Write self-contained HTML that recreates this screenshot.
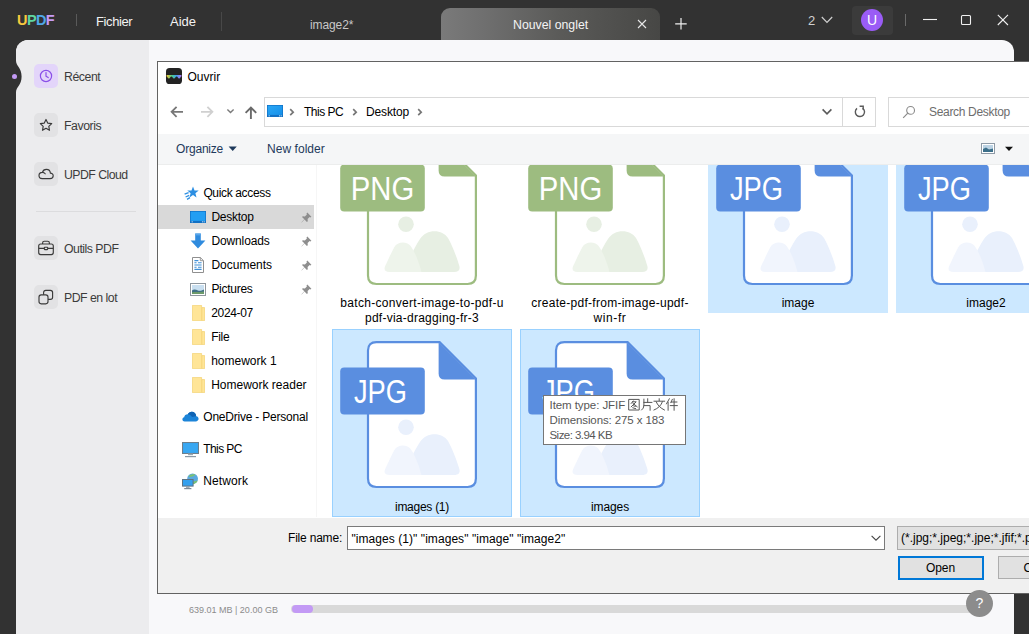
<!DOCTYPE html>
<html>
<head>
<meta charset="utf-8">
<title>UPDF</title>
<style>
*{box-sizing:border-box;margin:0;padding:0}
html,body{width:1029px;height:634px;overflow:hidden}
body{background:#323232;font-family:"Liberation Sans",sans-serif;position:relative;color:#000}
.abs{position:absolute}
.t{position:absolute;white-space:nowrap;line-height:1}
/* title bar */
.menu{color:#f2f2f2;font-size:13.5px}
.sep{position:absolute;width:1px;background:#5a5a5a}
/* panel */
#panel{left:16px;top:40px;width:998px;height:594px;background:#f8f8fa;border-radius:12px 12px 0 0}
#side{left:16px;top:40px;width:133px;height:594px;background:#ececee;border-radius:12px 0 0 0}
.sbtn{position:absolute;left:34px;width:24px;height:24px;border-radius:5px;background:#e2e2e4}
.slab{color:#3c3c3c;font-size:12.5px;left:64px}
/* dialog */
#dlg{left:157px;top:61px;width:900px;height:533px;background:#fff;border:1px solid #626262}
.nav{font-size:12px;color:#000}
.cell{position:absolute;width:180px}
.sel{background:#cce8ff}
.fname{position:absolute;left:0;width:180px;text-align:center;font-size:12px;line-height:15px;color:#000}
</style>
</head>
<body>
<!-- ===== top bar ===== -->
<div id="topbar" class="abs" style="left:0;top:0;width:1029px;height:40px">
  <div class="t" style="left:17px;top:13px;font-size:14.5px;font-weight:bold;letter-spacing:-0.6px"><span style="color:#f7c93e">U</span><span style="color:#5fd6a0">P</span><span style="color:#4fa8e8">D</span><span style="color:#c79bf7">F</span></div>
  <div class="sep" style="left:76px;top:14px;height:12px"></div>
  <div class="t menu" style="left:96px;top:15px;font-size:13px;letter-spacing:-0.4px">Fichier</div>
  <div class="t menu" style="left:170px;top:15px;font-size:13px">Aide</div>
  <div class="sep" style="left:221px;top:12px;height:19px;background:#484848"></div>
  <div class="t" style="left:310px;top:19px;font-size:12px;color:#c8c8c8;letter-spacing:-0.1px">image2*</div>
  <!-- active tab -->
  <div class="abs" style="left:441px;top:8px;width:219px;height:32px;border-radius:9px 9px 0 0;background:linear-gradient(90deg,#7a7a7a 0%,#6f6f6f 20%,#5a5a58 55%,#474745 100%)"></div>
  <div class="t" style="left:513px;top:19px;font-size:12.3px;color:#f4f4f4">Nouvel onglet</div>
  <svg class="abs" style="left:636px;top:18px" width="12" height="12" viewBox="0 0 12 12"><path d="M2 2 L10 10 M10 2 L2 10" stroke="#e8e8e8" stroke-width="1.1" fill="none"/></svg>
  <svg class="abs" style="left:674px;top:17px" width="14" height="14" viewBox="0 0 14 14"><path d="M7 1 V12.5 M1.2 6.8 H12.7" stroke="#f0f0f0" stroke-width="1.2" fill="none"/></svg>
  <div class="t" style="left:808px;top:14px;font-size:13px;color:#d0d0d0">2</div>
  <svg class="abs" style="left:820px;top:15px" width="14" height="10" viewBox="0 0 14 10"><path d="M1.8 2 L7 7.4 L12.2 2" stroke="#d0d0d0" stroke-width="1.2" fill="none"/></svg>
  <div class="abs" style="left:852px;top:6px;width:41px;height:29px;border-radius:4px;background:#3b3b3b"></div>
  <div class="abs" style="left:861px;top:9px;width:22px;height:22px;border-radius:11px;background:#9a5cf6"></div>
  <div class="t" style="left:867px;top:13px;font-size:14px;color:#fff">U</div>
  <div class="sep" style="left:905px;top:14px;height:12px;background:#6a6a6a"></div>
  <svg class="abs" style="left:921px;top:12px" width="18" height="16" viewBox="0 0 18 16"><path d="M2 7.5 H16" stroke="#f0f0f0" stroke-width="1.1"/></svg>
  <svg class="abs" style="left:959px;top:13px" width="14" height="14" viewBox="0 0 14 14"><rect x="2.5" y="2.5" width="9" height="9" rx="1" stroke="#f0f0f0" stroke-width="1.1" fill="none"/></svg>
  <svg class="abs" style="left:996px;top:13px" width="14" height="14" viewBox="0 0 14 14"><path d="M1.8 1.8 L12 12 M12 1.8 L1.8 12" stroke="#f0f0f0" stroke-width="1.1" fill="none"/></svg>
</div>

<!-- ===== light panel ===== -->
<div id="panel" class="abs"></div>
<div id="side" class="abs"></div>
<!-- notch + dot -->
<svg class="abs" style="left:14px;top:58.5px" width="10" height="35" viewBox="0 0 10 40" preserveAspectRatio="none"><path d="M2 0 V2 C2 8 7.6 10 7.6 20 C7.6 30 2 32 2 38 V40 H0 V0 Z" fill="#323232"/></svg>
<div class="abs" style="left:11.5px;top:73.5px;width:5px;height:5px;border-radius:3px;background:#c39af5"></div>
<!-- sidebar items -->
<div class="sbtn" style="top:64px;background:#e3d5fa"></div>
<svg class="abs" style="left:38px;top:68px" width="16" height="16" viewBox="0 0 16 16"><circle cx="8" cy="8" r="5.6" stroke="#8a4fe8" stroke-width="1.2" fill="none"/><path d="M8 4.6 V8.2 L10.2 9.6" stroke="#8a4fe8" stroke-width="1.2" fill="none" stroke-linecap="round" stroke-linejoin="round"/></svg>
<div class="t slab" style="top:71px;font-size:12.3px;letter-spacing:-0.45px">Récent</div>

<div class="sbtn" style="top:113px"></div>
<svg class="abs" style="left:38px;top:117px" width="16" height="16" viewBox="0 0 16 16"><path d="M8 2.4 L9.7 6.1 L13.7 6.6 L10.8 9.3 L11.5 13.3 L8 11.3 L4.5 13.3 L5.2 9.3 L2.3 6.6 L6.3 6.1 Z" stroke="#3a3a3a" stroke-width="1.15" fill="none" stroke-linejoin="round"/></svg>
<div class="t slab" style="top:120px;font-size:12.3px;letter-spacing:-0.45px">Favoris</div>

<div class="sbtn" style="top:162px"></div>
<svg class="abs" style="left:37px;top:166px" width="18" height="16" viewBox="0 0 18 16"><path d="M5.2 12.6 H13 C15 12.6 16.2 11.3 16.2 9.8 C16.2 8.2 15 7.1 13.4 7.1 C13.2 4.8 11.5 3.3 9.4 3.3 C7.4 3.3 5.9 4.5 5.4 6.3 C3.5 6.3 2 7.7 2 9.5 C2 11.3 3.4 12.6 5.2 12.6 Z M5.4 6.3 C6.6 6.3 7.6 6.9 8.2 7.8" stroke="#3a3a3a" stroke-width="1.15" fill="none" stroke-linecap="round" stroke-linejoin="round"/></svg>
<div class="t slab" style="top:169px;font-size:12.3px;letter-spacing:-0.55px">UPDF Cloud</div>

<div class="abs" style="left:36px;top:210.5px;width:100px;height:1px;background:#dcdcde"></div>

<div class="sbtn" style="top:236px"></div>
<svg class="abs" style="left:37px;top:239px" width="18" height="18" viewBox="0 0 18 18"><rect x="1.7" y="5" width="14.6" height="10.6" rx="2" stroke="#3a3a3a" stroke-width="1.15" fill="none"/><path d="M5.6 5 V3.9 C5.6 2.8 6.3 2.2 7.3 2.2 H10.7 C11.7 2.2 12.4 2.8 12.4 3.9 V5 M1.7 9.4 H7.3 M10.7 9.4 H16.3" stroke="#3a3a3a" stroke-width="1.15" fill="none"/><rect x="7.3" y="8.3" width="3.4" height="2.3" rx="0.5" stroke="#3a3a3a" stroke-width="1.1" fill="none"/></svg>
<div class="t slab" style="top:243px;font-size:12.3px;letter-spacing:-0.5px">Outils PDF</div>

<div class="sbtn" style="top:285px"></div>
<svg class="abs" style="left:37px;top:288px" width="18" height="18" viewBox="0 0 18 18"><rect x="2" y="6.8" width="9" height="9" rx="2.2" stroke="#3a3a3a" stroke-width="1.15" fill="none"/><path d="M6.6 6.8 V4.6 C6.6 3.2 7.4 2.4 8.8 2.4 H13.4 C14.8 2.4 15.6 3.2 15.6 4.6 V9.2 C15.6 10.6 14.8 11.4 13.4 11.4 H11" stroke="#3a3a3a" stroke-width="1.15" fill="none"/></svg>
<div class="t slab" style="top:292px;font-size:12.3px;letter-spacing:-0.5px">PDF en lot</div>

<!-- ===== dialog ===== -->
<div id="dlg" class="abs"></div>
<!-- title -->
<svg class="abs" style="left:166px;top:68px" width="16" height="16" viewBox="0 0 16 16">
  <defs><linearGradient id="wv" x1="0" x2="1" y1="0" y2="0"><stop offset="0" stop-color="#f9c531"/><stop offset="0.35" stop-color="#4fd08a"/><stop offset="0.65" stop-color="#3ea2f0"/><stop offset="1" stop-color="#b774f5"/></linearGradient></defs>
  <rect x="0" y="0" width="16" height="16" rx="3.6" fill="#232323"/>
  <path d="M0.6 7 H15.4 V8.6 C14.6 8.6 14.3 10.6 13.1 10.6 C11.9 10.6 11.8 8.4 10.6 8.4 C9.4 8.4 9.3 10.6 8 10.6 C6.7 10.6 6.6 8.4 5.4 8.4 C4.2 8.4 4.1 10.6 2.9 10.6 C1.7 10.6 1.4 8.6 0.6 8.6 Z" fill="url(#wv)"/>
</svg>
<div class="t" style="left:187.5px;top:70.5px;font-size:12px">Ouvrir</div>
<!-- nav arrows -->
<svg class="abs" style="left:169px;top:104px" width="16" height="16" viewBox="0 0 16 16"><path d="M14 7.8 H2.8 M7.6 2.8 L2.6 7.8 L7.6 12.8" stroke="#777" stroke-width="1.8" fill="none"/></svg>
<svg class="abs" style="left:199px;top:104px" width="16" height="16" viewBox="0 0 16 16"><path d="M2 7.8 H13.2 M8.4 2.8 L13.4 7.8 L8.4 12.8" stroke="#d0d0d0" stroke-width="1.8" fill="none"/></svg>
<svg class="abs" style="left:226px;top:107px" width="9" height="8" viewBox="0 0 9 8"><path d="M1.4 2.4 L4.5 5.5 L7.6 2.4" stroke="#7a7a7a" stroke-width="1.4" fill="none"/></svg>
<svg class="abs" style="left:243px;top:105px" width="16" height="16" viewBox="0 0 16 16"><path d="M7.9 14 V3 M2.6 7.9 L7.9 2.6 L13.2 7.9" stroke="#6a6a6a" stroke-width="1.9" fill="none"/></svg>
<!-- address box -->
<div class="abs" style="left:264px;top:97px;width:612px;height:30px;border:1px solid #d9d9d9;background:#fff"></div>
<div class="abs" style="left:842px;top:98px;width:1px;height:28px;background:#d9d9d9"></div>
<svg class="abs" style="left:267px;top:105px" width="16" height="12" viewBox="0 0 16 12"><defs><linearGradient id="pcg" x1="0" x2="1" y1="0" y2="1"><stop offset="0" stop-color="#2aa7f5"/><stop offset="1" stop-color="#1590ea"/></linearGradient></defs><rect x="0" y="0" width="16" height="12" fill="#1170c4"/><rect x="0.7" y="0.7" width="14.6" height="9.2" fill="url(#pcg)"/><rect x="1.6" y="10.4" width="1.2" height="0.9" fill="#d8ecfb"/><rect x="12" y="10.4" width="1.1" height="0.9" fill="#d8ecfb"/><rect x="13.7" y="10.4" width="1.1" height="0.9" fill="#d8ecfb"/></svg>
<svg class="abs" style="left:288px;top:107px" width="8" height="10" viewBox="0 0 8 10"><path d="M2.2 2.2 L5.2 5.2 L2.2 8.2" stroke="#767676" stroke-width="1.7" fill="none"/></svg>
<div class="t" style="left:304px;top:105.5px;font-size:12px;letter-spacing:-0.5px">This PC</div>
<svg class="abs" style="left:350.5px;top:107px" width="8" height="10" viewBox="0 0 8 10"><path d="M2.2 2.2 L5.2 5.2 L2.2 8.2" stroke="#767676" stroke-width="1.7" fill="none"/></svg>
<div class="t" style="left:366px;top:105.5px;font-size:12px;letter-spacing:-0.15px">Desktop</div>
<svg class="abs" style="left:415.5px;top:107px" width="8" height="10" viewBox="0 0 8 10"><path d="M2.2 2.2 L5.2 5.2 L2.2 8.2" stroke="#767676" stroke-width="1.7" fill="none"/></svg>
<svg class="abs" style="left:821px;top:107px" width="12" height="10" viewBox="0 0 12 10"><path d="M1.6 2.4 L6 6.8 L10.4 2.4" stroke="#5a5a5a" stroke-width="1.6" fill="none"/></svg>
<svg class="abs" style="left:852px;top:104px" width="16" height="16" viewBox="0 0 16 16"><path d="M10.6 4.2 A4.6 4.6 0 1 1 5 4.4" stroke="#5a5a5a" stroke-width="1.4" fill="none"/><path d="M7.6 2.2 H11.2 V5.8" stroke="#5a5a5a" stroke-width="1.4" fill="none"/></svg>
<!-- search -->
<div class="abs" style="left:888px;top:97px;width:160px;height:30px;border:1px solid #d9d9d9;background:#fff"></div>
<svg class="abs" style="left:902px;top:105px" width="14" height="14" viewBox="0 0 14 14"><circle cx="8.6" cy="5.4" r="3.9" stroke="#8a8a8a" stroke-width="1.1" fill="none"/><path d="M5.8 8.2 L1.2 12.8" stroke="#8a8a8a" stroke-width="1.2"/></svg>
<div class="t" style="left:929px;top:105.5px;font-size:12px;color:#6d6d6d;letter-spacing:-0.32px">Search Desktop</div>
<!-- toolbar -->
<div class="abs" style="left:158px;top:134px;width:880px;height:31px;background:#f5f6f7;border-bottom:1px solid #eceded"></div>
<div class="t" style="left:176px;top:143px;font-size:12px;color:#1e395b;letter-spacing:-0.2px">Organize</div>
<svg class="abs" style="left:228px;top:146px" width="10" height="6" viewBox="0 0 10 6"><path d="M0.6 0.5 H8.8 L4.7 5 Z" fill="#1e395b"/></svg>
<div class="t" style="left:267px;top:143px;font-size:12px;color:#1e395b;letter-spacing:0.05px">New folder</div>
<svg class="abs" style="left:981px;top:143px" width="14" height="11" viewBox="0 0 14 11"><rect x="0.5" y="0.5" width="13" height="10" fill="#fff" stroke="#8e9aa6" stroke-width="1"/><rect x="2" y="2" width="10" height="7" fill="#bcd3e4"/><path d="M2 9 V6 L5 4.4 L8 6.6 L12 5.4 V9 Z" fill="#3c6f8a"/></svg>
<svg class="abs" style="left:1004px;top:146px" width="10" height="6" viewBox="0 0 10 6"><path d="M1 0.8 H9 L5 5 Z" fill="#111"/></svg>

<!-- nav pane -->
<div class="abs" style="left:158px;top:205px;width:156px;height:24px;background:#d9d9d9"></div>
<div class="abs" style="left:316px;top:165px;width:1px;height:352px;background:#f6f6f6"></div>
<div class="t nav" style="left:203.4px;top:186.5px;letter-spacing:-0.35px">Quick access</div>
<div class="t nav" style="left:211.4px;top:210.5px;letter-spacing:-0.26px">Desktop</div>
<div class="t nav" style="left:211.4px;top:234.5px;letter-spacing:-0.12px">Downloads</div>
<div class="t nav" style="left:211.4px;top:258.5px;letter-spacing:0px">Documents</div>
<div class="t nav" style="left:211.4px;top:282.5px;letter-spacing:-0.27px">Pictures</div>
<div class="t nav" style="left:211.2px;top:306.5px;letter-spacing:-0.33px">2024-07</div>
<div class="t nav" style="left:211.2px;top:330.5px;letter-spacing:-0.3px">File</div>
<div class="t nav" style="left:211.2px;top:354.5px;letter-spacing:0px">homework 1</div>
<div class="t nav" style="left:211.2px;top:378.5px;letter-spacing:0px">Homework reader</div>
<div class="t nav" style="left:203.3px;top:410.5px;letter-spacing:-0.22px">OneDrive - Personal</div>
<div class="t nav" style="left:203.3px;top:442.5px;letter-spacing:-0.6px">This PC</div>
<div class="t nav" style="left:203.3px;top:474.5px;letter-spacing:0.1px">Network</div>
<svg class="abs" style="left:184px;top:186px" width="15" height="14" viewBox="0 0 15 14"><path d="M9 0.4 L10.5 4.4 L14.7 4.6 L11.4 7.3 L12.5 11.5 L9 9.1 L5.5 11.5 L6.6 7.3 L3.3 4.6 L7.5 4.4 Z" fill="#2d8fe2"/><path d="M0.6 8.2 L4.6 6.6 M1.6 11 L5.2 9.4 M3 13.4 L6 11.6" stroke="#2d8fe2" stroke-width="1.3" fill="none"/></svg>
<svg class="abs" style="left:190px;top:211px" width="16" height="12" viewBox="0 0 16 12"><rect x="0" y="0" width="16" height="12" fill="#1170c4"/><rect x="0.7" y="0.7" width="14.6" height="9.2" fill="#229ef3"/><rect x="1.6" y="10.4" width="1.2" height="0.9" fill="#d8ecfb"/><rect x="12" y="10.4" width="1.1" height="0.9" fill="#d8ecfb"/><rect x="13.7" y="10.4" width="1.1" height="0.9" fill="#d8ecfb"/></svg>
<svg class="abs" style="left:190px;top:233px" width="16" height="16" viewBox="0 0 16 16"><path d="M5.2 0.6 H10.8 V7.4 H15.4 L8 15.4 L0.6 7.4 H5.2 Z" fill="#2f8bde"/><path d="M5.2 0.6 H10.8 V2.4 H5.2 Z" fill="#5aa6ea"/></svg>
<svg class="abs" style="left:192px;top:257px" width="12" height="16" viewBox="0 0 12 16"><path d="M0.5 0.5 H8.3 L11.5 3.7 V15.5 H0.5 Z" fill="#fff" stroke="#8f8f8f" stroke-width="1"/><path d="M8.3 0.5 V3.7 H11.5" fill="none" stroke="#8f8f8f" stroke-width="0.9"/><path d="M2.4 3.6 H6.4 M2.4 5.8 H4.6 M6 5.8 H9.6 M2.4 8 H9.6 M2.4 10.2 H4.6 M6 10.2 H9.6 M2.4 12.4 H9.6" stroke="#3f8fd6" stroke-width="1.1"/></svg>
<svg class="abs" style="left:190px;top:283px" width="16" height="13" viewBox="0 0 16 13"><rect x="0.5" y="0.5" width="15" height="12" fill="#fff" stroke="#8f979e" stroke-width="1"/><rect x="2" y="2" width="12" height="9" fill="#c9dff0"/><path d="M2 11 V7.4 C4 5.6 6 6.6 8 7.6 C10 8.4 12 7 14 6.4 V11 Z" fill="#3f6f86"/><path d="M2 11 V9.2 C5 8.4 9 9.6 14 8.6 V11 Z" fill="#6c9a6a"/></svg>
<svg class="abs" style="left:191.5px;top:305.0px" width="13" height="16" viewBox="0 0 13 16"><path d="M0.4 0.4 H9.6 V2.6 H12.6 V15.6 H0.4 Z" fill="#ffe597" stroke="#f4d377" stroke-width="0.8"/><path d="M9.8 2.8 V15.4" stroke="#f1cd6c" stroke-width="0.7" fill="none"/></svg>
<svg class="abs" style="left:191.5px;top:329.0px" width="13" height="16" viewBox="0 0 13 16"><path d="M0.4 0.4 H9.6 V2.6 H12.6 V15.6 H0.4 Z" fill="#ffe597" stroke="#f4d377" stroke-width="0.8"/><path d="M9.8 2.8 V15.4" stroke="#f1cd6c" stroke-width="0.7" fill="none"/></svg>
<svg class="abs" style="left:191.5px;top:353.0px" width="13" height="16" viewBox="0 0 13 16"><path d="M0.4 0.4 H9.6 V2.6 H12.6 V15.6 H0.4 Z" fill="#ffe597" stroke="#f4d377" stroke-width="0.8"/><path d="M9.8 2.8 V15.4" stroke="#f1cd6c" stroke-width="0.7" fill="none"/></svg>
<svg class="abs" style="left:191.5px;top:377.0px" width="13" height="16" viewBox="0 0 13 16"><path d="M0.4 0.4 H9.6 V2.6 H12.6 V15.6 H0.4 Z" fill="#ffe597" stroke="#f4d377" stroke-width="0.8"/><path d="M9.8 2.8 V15.4" stroke="#f1cd6c" stroke-width="0.7" fill="none"/></svg>
<svg class="abs" style="left:182px;top:411px" width="17" height="11" viewBox="0 0 17 11"><path d="M4 10.4 H13.6 C15.4 10.4 16.6 9.3 16.6 7.8 C16.6 6.4 15.6 5.4 14.2 5.2 C14 2.6 12.2 0.8 9.8 0.8 C8 0.8 6.6 1.8 5.8 3.2 C3.8 3.2 2.4 4.4 2.2 6.2 C1 6.6 0.4 7.4 0.4 8.4 C0.4 9.6 1.4 10.4 2.6 10.4 Z" fill="#1c84d8"/><path d="M5.8 3.2 C7.4 3.2 9 4.2 10 6 L14.2 5.2 C14 2.6 12.2 0.8 9.8 0.8 C8 0.8 6.6 1.8 5.8 3.2 Z" fill="#0f63b4"/></svg>
<svg class="abs" style="left:182px;top:442px" width="17" height="16" viewBox="0 0 17 16"><rect x="0.5" y="0.5" width="16" height="11" fill="#3aa4ee" stroke="#6d7f8c" stroke-width="1"/><rect x="1.6" y="1.6" width="13.8" height="8.8" fill="#39a8f2"/><path d="M6 11.6 H11 V13.2 H6 Z" fill="#9aa7b1"/><path d="M3 14 H14 V15.2 H3 Z" fill="#8c99a4"/></svg>
<svg class="abs" style="left:182px;top:473px" width="17" height="17" viewBox="0 0 17 17"><circle cx="10.6" cy="5.8" r="5.4" fill="#5aa9df"/><path d="M6.4 3.4 C8 1.2 11 0.6 13.4 1.6 C12 3.4 9.6 4.4 6.4 3.4 Z M8 9.8 C10 8.4 13.6 8.4 15.6 7.6 C15 9.8 12.4 11.6 10 11.2 Z" fill="#7cc26e"/><rect x="0.5" y="6.5" width="10.6" height="6.6" fill="#34a0ee" stroke="#5f7383" stroke-width="1"/><path d="M4 13.4 H7.6 V14.8 H4 Z" fill="#8c99a4"/><path d="M2.2 15 H9.4 V16.2 H2.2 Z" fill="#7d8b97"/></svg>
<svg class="abs" style="left:300.5px;top:211.5px" width="11" height="11" viewBox="0 0 11 11"><path d="M6.3 0.6 L10.4 4.7 L9.4 5.5 L8.6 5.1 L6.6 7.1 L6.8 9.2 L5.9 10 L3.5 7.6 L0.7 10.4 L0.5 10.3 L3.3 7.3 L1 5.1 L1.8 4.2 L3.9 4.4 L5.9 2.4 L5.5 1.6 Z" fill="#8e8e8e"/></svg>
<svg class="abs" style="left:300.5px;top:235.5px" width="11" height="11" viewBox="0 0 11 11"><path d="M6.3 0.6 L10.4 4.7 L9.4 5.5 L8.6 5.1 L6.6 7.1 L6.8 9.2 L5.9 10 L3.5 7.6 L0.7 10.4 L0.5 10.3 L3.3 7.3 L1 5.1 L1.8 4.2 L3.9 4.4 L5.9 2.4 L5.5 1.6 Z" fill="#8e8e8e"/></svg>
<svg class="abs" style="left:300.5px;top:259.5px" width="11" height="11" viewBox="0 0 11 11"><path d="M6.3 0.6 L10.4 4.7 L9.4 5.5 L8.6 5.1 L6.6 7.1 L6.8 9.2 L5.9 10 L3.5 7.6 L0.7 10.4 L0.5 10.3 L3.3 7.3 L1 5.1 L1.8 4.2 L3.9 4.4 L5.9 2.4 L5.5 1.6 Z" fill="#8e8e8e"/></svg>
<svg class="abs" style="left:300.5px;top:283.5px" width="11" height="11" viewBox="0 0 11 11"><path d="M6.3 0.6 L10.4 4.7 L9.4 5.5 L8.6 5.1 L6.6 7.1 L6.8 9.2 L5.9 10 L3.5 7.6 L0.7 10.4 L0.5 10.3 L3.3 7.3 L1 5.1 L1.8 4.2 L3.9 4.4 L5.9 2.4 L5.5 1.6 Z" fill="#8e8e8e"/></svg>


<!-- file area (clipped at toolbar bottom) -->
<div class="abs" style="left:317px;top:165px;width:712px;height:353px;overflow:hidden">
<div class="abs sel" style="left:391px;top:-39.5px;width:180px;height:187px"></div>
<div class="abs sel" style="left:579px;top:-39.5px;width:180px;height:187px"></div>
<div class="abs sel" style="left:15px;top:164px;width:180px;height:188px;border:1px solid #99d1ff"></div>
<div class="abs sel" style="left:203px;top:164px;width:180px;height:188px;border:1px solid #99d1ff"></div>
<svg class="abs" style="left:15px;top:-39.5px" width="180" height="187" viewBox="0 0 180 187"><path d="M44.4 13.2 H107.6 L143.9 49.5 V149.6 Q143.9 158 135.5 158 H44.4 Q36 158 36 149.6 V21.6 Q36 13.2 44.4 13.2 Z" fill="#fff" stroke="#9dbc80" stroke-width="2.2"/><path d="M106.6 13.2 L143.9 50.6 H112.6 Q106.6 50.6 106.6 44.6 Z" fill="#9dbc80"/><circle cx="74" cy="98.3" r="7.8" fill="#e7efe3"/><path d="M70 146 C74 140 82 122 88 113 C94 103 110 102.5 116 112 C120.5 120 125 132 127.2 139.5 C128.6 144 126.5 146 122 146 Z" fill="#e7efe3"/><path d="M57.5 146 C52.5 146 51.6 143 53.4 139.5 C56 134.5 59 127 62.4 121 C65.4 115.2 75.4 115 79 120.4 C82.4 125.6 86 133 89.5 146 Z" fill="#eef4eb"/><rect x="8.2" y="38.6" width="84.6" height="47" rx="4" fill="#9dbc80"/><text x="18.8" y="74.3" font-family="Liberation Sans, sans-serif" font-size="33" fill="#fff" textLength="63.5" lengthAdjust="spacingAndGlyphs">PNG</text></svg>
<svg class="abs" style="left:203px;top:-39.5px" width="180" height="187" viewBox="0 0 180 187"><path d="M44.4 13.2 H107.6 L143.9 49.5 V149.6 Q143.9 158 135.5 158 H44.4 Q36 158 36 149.6 V21.6 Q36 13.2 44.4 13.2 Z" fill="#fff" stroke="#9dbc80" stroke-width="2.2"/><path d="M106.6 13.2 L143.9 50.6 H112.6 Q106.6 50.6 106.6 44.6 Z" fill="#9dbc80"/><circle cx="74" cy="98.3" r="7.8" fill="#e7efe3"/><path d="M70 146 C74 140 82 122 88 113 C94 103 110 102.5 116 112 C120.5 120 125 132 127.2 139.5 C128.6 144 126.5 146 122 146 Z" fill="#e7efe3"/><path d="M57.5 146 C52.5 146 51.6 143 53.4 139.5 C56 134.5 59 127 62.4 121 C65.4 115.2 75.4 115 79 120.4 C82.4 125.6 86 133 89.5 146 Z" fill="#eef4eb"/><rect x="8.2" y="38.6" width="84.6" height="47" rx="4" fill="#9dbc80"/><text x="18.8" y="74.3" font-family="Liberation Sans, sans-serif" font-size="33" fill="#fff" textLength="63.5" lengthAdjust="spacingAndGlyphs">PNG</text></svg>
<svg class="abs" style="left:391px;top:-39.5px" width="180" height="187" viewBox="0 0 180 187"><path d="M44.4 13.2 H107.6 L143.9 49.5 V149.6 Q143.9 158 135.5 158 H44.4 Q36 158 36 149.6 V21.6 Q36 13.2 44.4 13.2 Z" fill="#fff" stroke="#5a8ee0" stroke-width="2.2"/><path d="M106.6 13.2 L143.9 50.6 H112.6 Q106.6 50.6 106.6 44.6 Z" fill="#5a8ee0"/><circle cx="74" cy="98.3" r="7.8" fill="#e9f0fc"/><path d="M70 146 C74 140 82 122 88 113 C94 103 110 102.5 116 112 C120.5 120 125 132 127.2 139.5 C128.6 144 126.5 146 122 146 Z" fill="#e9f0fc"/><path d="M57.5 146 C52.5 146 51.6 143 53.4 139.5 C56 134.5 59 127 62.4 121 C65.4 115.2 75.4 115 79 120.4 C82.4 125.6 86 133 89.5 146 Z" fill="#f1f5fd"/><rect x="8.2" y="38.6" width="84.6" height="47" rx="4" fill="#5a8ee0"/><text x="22" y="74.3" font-family="Liberation Sans, sans-serif" font-size="33" fill="#fff" textLength="53" lengthAdjust="spacingAndGlyphs">JPG</text></svg>
<svg class="abs" style="left:579px;top:-39.5px" width="180" height="187" viewBox="0 0 180 187"><path d="M44.4 13.2 H107.6 L143.9 49.5 V149.6 Q143.9 158 135.5 158 H44.4 Q36 158 36 149.6 V21.6 Q36 13.2 44.4 13.2 Z" fill="#fff" stroke="#5a8ee0" stroke-width="2.2"/><path d="M106.6 13.2 L143.9 50.6 H112.6 Q106.6 50.6 106.6 44.6 Z" fill="#5a8ee0"/><circle cx="74" cy="98.3" r="7.8" fill="#e9f0fc"/><path d="M70 146 C74 140 82 122 88 113 C94 103 110 102.5 116 112 C120.5 120 125 132 127.2 139.5 C128.6 144 126.5 146 122 146 Z" fill="#e9f0fc"/><path d="M57.5 146 C52.5 146 51.6 143 53.4 139.5 C56 134.5 59 127 62.4 121 C65.4 115.2 75.4 115 79 120.4 C82.4 125.6 86 133 89.5 146 Z" fill="#f1f5fd"/><rect x="8.2" y="38.6" width="84.6" height="47" rx="4" fill="#5a8ee0"/><text x="22" y="74.3" font-family="Liberation Sans, sans-serif" font-size="33" fill="#fff" textLength="53" lengthAdjust="spacingAndGlyphs">JPG</text></svg>
<svg class="abs" style="left:15px;top:164px" width="180" height="187" viewBox="0 0 180 187"><path d="M44.4 13.2 H107.6 L143.9 49.5 V149.6 Q143.9 158 135.5 158 H44.4 Q36 158 36 149.6 V21.6 Q36 13.2 44.4 13.2 Z" fill="#fff" stroke="#5a8ee0" stroke-width="2.2"/><path d="M106.6 13.2 L143.9 50.6 H112.6 Q106.6 50.6 106.6 44.6 Z" fill="#5a8ee0"/><circle cx="74" cy="98.3" r="7.8" fill="#e9f0fc"/><path d="M70 146 C74 140 82 122 88 113 C94 103 110 102.5 116 112 C120.5 120 125 132 127.2 139.5 C128.6 144 126.5 146 122 146 Z" fill="#e9f0fc"/><path d="M57.5 146 C52.5 146 51.6 143 53.4 139.5 C56 134.5 59 127 62.4 121 C65.4 115.2 75.4 115 79 120.4 C82.4 125.6 86 133 89.5 146 Z" fill="#f1f5fd"/><rect x="8.2" y="38.6" width="84.6" height="47" rx="4" fill="#5a8ee0"/><text x="22" y="74.3" font-family="Liberation Sans, sans-serif" font-size="33" fill="#fff" textLength="53" lengthAdjust="spacingAndGlyphs">JPG</text></svg>
<svg class="abs" style="left:203px;top:164px" width="180" height="187" viewBox="0 0 180 187"><path d="M44.4 13.2 H107.6 L143.9 49.5 V149.6 Q143.9 158 135.5 158 H44.4 Q36 158 36 149.6 V21.6 Q36 13.2 44.4 13.2 Z" fill="#fff" stroke="#5a8ee0" stroke-width="2.2"/><path d="M106.6 13.2 L143.9 50.6 H112.6 Q106.6 50.6 106.6 44.6 Z" fill="#5a8ee0"/><circle cx="74" cy="98.3" r="7.8" fill="#e9f0fc"/><path d="M70 146 C74 140 82 122 88 113 C94 103 110 102.5 116 112 C120.5 120 125 132 127.2 139.5 C128.6 144 126.5 146 122 146 Z" fill="#e9f0fc"/><path d="M57.5 146 C52.5 146 51.6 143 53.4 139.5 C56 134.5 59 127 62.4 121 C65.4 115.2 75.4 115 79 120.4 C82.4 125.6 86 133 89.5 146 Z" fill="#f1f5fd"/><rect x="8.2" y="38.6" width="84.6" height="47" rx="4" fill="#5a8ee0"/><text x="22" y="74.3" font-family="Liberation Sans, sans-serif" font-size="33" fill="#fff" textLength="53" lengthAdjust="spacingAndGlyphs">JPG</text></svg>
<div class="fname" style="left:15px;top:130.5px"><span style="letter-spacing:0.31px">batch-convert-image-to-pdf-u</span><br><span style="letter-spacing:0.25px">pdf-via-dragging-fr-3</span></div>
<div class="fname" style="left:203px;top:130.5px"><span style="letter-spacing:0.27px">create-pdf-from-image-updf-</span><br><span style="letter-spacing:0.6px">win-fr</span></div>
<div class="fname" style="left:391px;top:130.5px"><span style="letter-spacing:0px">image</span></div>
<div class="fname" style="left:579px;top:130.5px"><span style="letter-spacing:0px">image2</span></div>
<div class="fname" style="left:15px;top:335px"><span style="letter-spacing:-0.27px">images (1)</span></div>
<div class="fname" style="left:203px;top:335px"><span style="letter-spacing:-0.1px">images</span></div>
</div>
<!-- bottom panel -->
<div class="abs" style="left:158px;top:518px;width:880px;height:75px;background:#f0f0f0"></div>
<div class="t" style="left:288px;top:532px;font-size:12px;letter-spacing:-0.2px">File name:</div>
<div class="abs" style="left:347px;top:526px;width:538px;height:24px;border:1px solid #7a7a7a;background:#fff"></div>
<div class="t" style="left:351.5px;top:533px;font-size:12px;letter-spacing:0.06px">"images (1)" "images" "image" "image2"</div>
<svg class="abs" style="left:870px;top:534px" width="12" height="8" viewBox="0 0 12 8"><path d="M1.6 1.8 L6 6.2 L10.4 1.8" stroke="#444" stroke-width="1.1" fill="none"/></svg>
<div class="abs" style="left:897px;top:526px;width:160px;height:24px;border:1px solid #adadad;background:#e1e1e1"></div>
<div class="t" style="left:901px;top:532px;font-size:12px">(*.jpg;*.jpeg;*.jpe;*.jfif;*.p</div>
<div class="abs" style="left:898px;top:556px;width:86px;height:24px;border:2px solid #0078d7;background:#e1e1e1"></div>
<div class="t" style="left:926px;top:562px;font-size:12px;letter-spacing:-0.1px">Open</div>
<div class="abs" style="left:998px;top:556px;width:60px;height:23px;border:1px solid #adadad;background:#e1e1e1"></div>
<div class="t" style="left:1023.5px;top:562px;font-size:12px">C</div>
<!-- storage -->
<div class="t" style="left:189px;top:605.5px;font-size:9px;color:#8c8c8c">639.01 MB | 20.00 GB</div>
<div class="abs" style="left:291px;top:605px;width:694px;height:8px;border-radius:4px;background:#d9d9d9"></div>
<div class="abs" style="left:292px;top:605px;width:21px;height:8px;border-radius:4px;background:#c39af5"></div>
<div class="abs" style="left:966px;top:590px;width:27px;height:27px;border-radius:14px;background:#8c8c8c"></div>
<div class="t" style="left:975.5px;top:596px;font-size:14px;color:#fff">?</div>

<!-- tooltip -->
<div class="abs" style="left:543px;top:395px;width:143px;height:50px;border:1px solid #767676;background:#fff"></div>
<div class="t" style="left:549.5px;top:399.5px;font-size:11.5px;color:#575757;letter-spacing:-0.07px">Item type: JFIF</div>
<svg class="abs" style="left:628px;top:398px" width="51" height="13" viewBox="0 0 51 13" fill="none" stroke="#575757" stroke-width="1" stroke-linecap="square">
  <g transform="translate(0.2,0.4)"><path d="M1 1 H11 V11.6 H1 Z"/><path d="M5 2.6 L3 5 M4.4 3.4 H8 L3 8.4 M4.6 4.8 L9 8.4 M5.4 7.4 L7 8 M4.6 9.4 L7.4 10.2"/></g>
  <g transform="translate(12.7,0.4)"><path d="M3.2 0.8 V7 Q3.2 10 1 11.6 M7 0.4 V4 M3.2 4 H11.2 M3.2 7.2 H9.4 V11.8"/></g>
  <g transform="translate(25.2,0.4)"><path d="M6 0.4 V2.2 M0.8 2.8 H11.4 M3 3.4 Q5 8.6 11.2 11.6 M9.2 3.4 Q7.4 9 0.8 11.6"/></g>
  <g transform="translate(37.7,0.4)"><path d="M3.6 0.4 L0.8 5.4 M2.4 3.8 V11.8 M6.6 1 L5.2 4.2 M5.6 3.6 H11.2 M4.6 7.2 H11.6 M8.4 0.4 V11.8"/></g>
</svg>
<div class="t" style="left:549.5px;top:414.5px;font-size:11.5px;color:#575757;letter-spacing:-0.1px">Dimensions: 275 x 183</div>
<div class="t" style="left:549.5px;top:429.5px;font-size:11.5px;color:#575757;letter-spacing:-0.55px">Size: 3.94 KB</div>

</body>
</html>
